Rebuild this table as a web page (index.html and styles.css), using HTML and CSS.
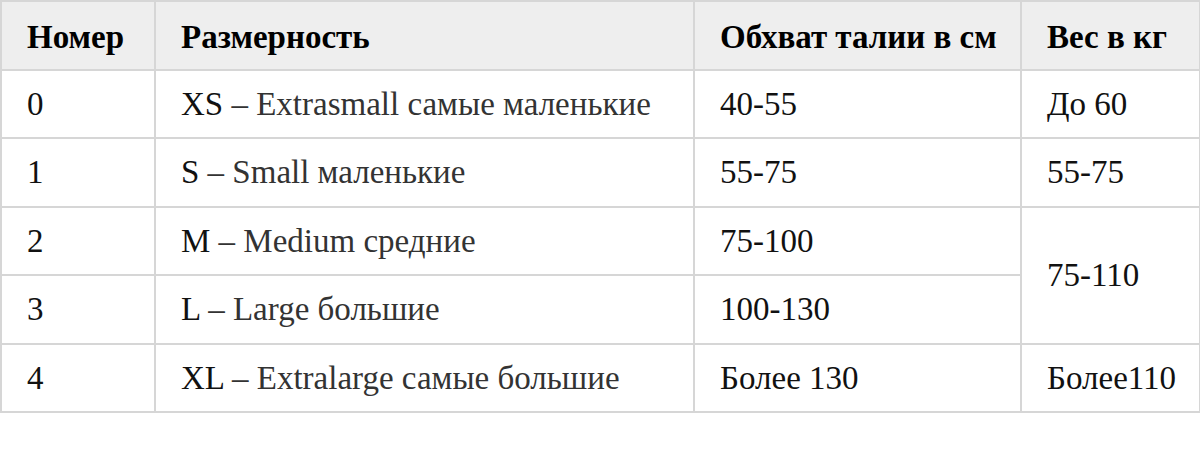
FILE: index.html
```html
<!DOCTYPE html>
<html lang="ru">
<head>
<meta charset="utf-8">
<title>Таблица размеров</title>
<link rel="stylesheet" href="styles.css">
</head>
<body>
<table class="sizes">
  <colgroup>
    <col class="c1"><col class="c2"><col class="c3"><col class="c4">
  </colgroup>
  <thead>
    <tr><th>Номер</th><th>Размерность</th><th>Обхват талии в см</th><th>Вес в кг</th></tr>
  </thead>
  <tbody>
    <tr><td>0</td><td>XS <span class="soft">– Extrasmall самые маленькие</span></td><td>40-55</td><td>До 60</td></tr>
    <tr><td>1</td><td>S <span class="soft">– Small маленькие</span></td><td>55-75</td><td>55-75</td></tr>
    <tr><td>2</td><td>M <span class="soft">– Medium средние</span></td><td>75-100</td><td rowspan="2">75-110</td></tr>
    <tr><td>3</td><td>L <span class="soft">– Large большие</span></td><td>100-130</td></tr>
    <tr><td>4</td><td>XL <span class="soft">– Extralarge самые большие</span></td><td>Более 130</td><td>Более110</td></tr>
  </tbody>
</table>
</body>
</html>
```
FILE: styles.css
```css
html, body {
  margin: 0;
  padding: 0;
  background: #ffffff;
}
.sizes {
  border-collapse: collapse;
  width: 1199px;
  margin: 0;
  table-layout: fixed;
  font-family: "Liberation Serif", "Times New Roman", serif;
  font-size: 33px;
  color: #111111;
}
.c1 { width: 154px; }
.c2 { width: 539px; }
.c3 { width: 327px; }
.c4 { width: 179px; }
.sizes th,
.sizes td {
  border: 2px solid #d6d6d6;
  padding: 0 0 0 25px;
  height: 66.5px;
  text-align: left;
  vertical-align: middle;
  line-height: 36px;
  white-space: nowrap;
}
.sizes th {
  background: #eeeeee;
  font-weight: bold;
  color: #000000;
  padding-top: 3px;
  height: 63.5px;
}
.soft {
  color: #333333;
}
```
